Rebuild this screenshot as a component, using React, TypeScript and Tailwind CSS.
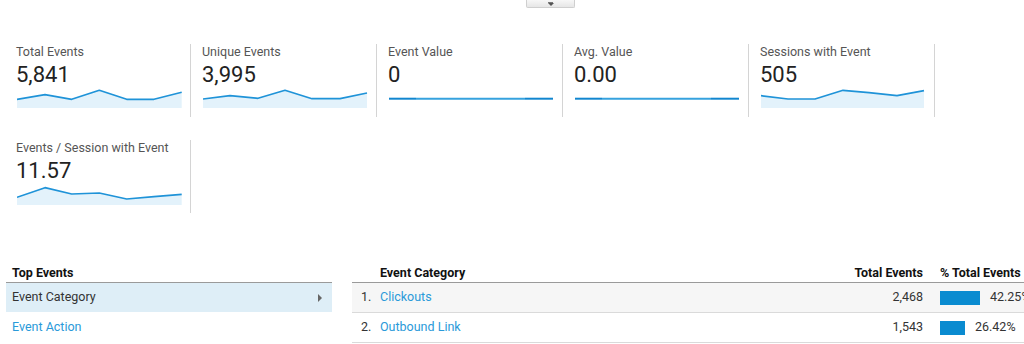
import React from "react";

type P = [number, number];

const Spark = ({ pts, bottom = 20 }: { pts: P[]; bottom?: number }) => {
  const line = pts.map((p) => p.join(",")).join(" ");
  const area = `${pts[0][0]},${bottom} ${line} ${pts[pts.length - 1][0]},${bottom}`;
  return (
    <svg width="166" height="22" className="block ml-[1px]">
      <polygon points={area} fill="#e3f2fb" />
      <polyline points={line} fill="none" stroke="#1f93d8" strokeWidth="1.7" strokeLinejoin="round" />
    </svg>
  );
};

const Flat = () => (
  <svg width="166" height="22" className="block ml-[1px]">
    <line x1="0" y1="10.7" x2="27" y2="10.7" stroke="#1186cf" strokeWidth="2" />
    <line x1="27" y1="10.7" x2="136" y2="10.7" stroke="#36a2de" strokeWidth="2" />
    <line x1="136" y1="10.7" x2="164" y2="10.7" stroke="#1186cf" strokeWidth="2" />
  </svg>
);

const Card = ({ label, value, children }: { label: string; value: string; children: React.ReactNode }) => (
  <div className="h-[73px] border-r border-[#d4d4d4] pl-[11px]">
    <div className="text-[12.5px] leading-[15px] text-[#555]">{label}</div>
    <div className="mt-[3px] text-[22px] leading-[26px] text-[#222]">{value}</div>
    {children}
  </div>
);

export default function App() {
  return (
    <div className="w-[1024px] h-[344px] overflow-hidden bg-white" style={{ fontFamily: "Roboto, 'Liberation Sans', sans-serif" }}>
      <div className="h-[44px]">
        <div className="ml-[526px] w-[49px] h-[8px] rounded-b-[2px] border border-t-0 border-[#cfcfcf] bg-gradient-to-b from-[#f7f7f7] to-[#e6e6e6] flex flex-col items-center pt-[2px]">
          <div className="w-[5px] h-[1px] bg-[#777]" />
          <div className="w-0 h-0 border-l-[3px] border-r-[3px] border-t-[3px] border-l-transparent border-r-transparent border-t-[#555]" />
        </div>
      </div>
      <div className="grid grid-cols-[repeat(5,186px)] gap-y-[23px] pl-[5px]">
        <Card label="Total Events" value="5,841">
          <Spark pts={[[0, 11.3], [28, 6.7], [54.7, 11.3], [82.3, 2.3], [109.7, 11.3], [137, 11.3], [164.7, 4.3]]} />
        </Card>
        <Card label="Unique Events" value="3,995">
          <Spark pts={[[0, 11], [27, 7.7], [55, 10.3], [82, 2.3], [109, 10.7], [137, 10.7], [164, 5]]} />
        </Card>
        <Card label="Event Value" value="0">
          <Flat />
        </Card>
        <Card label="Avg. Value" value="0.00">
          <Flat />
        </Card>
        <Card label="Sessions with Event" value="505">
          <Spark pts={[[0, 7.7], [27, 11], [54, 11], [82, 2.3], [108, 4.7], [136, 7.7], [163, 2.7]]} />
        </Card>
        <Card label="Events / Session with Event" value="11.57">
          <Spark bottom={21} pts={[[0, 13.3], [28, 3.7], [54.7, 10], [82.3, 9], [109.7, 15], [137, 12.7], [164.7, 10.3]]} />
        </Card>
      </div>

      <div className="mt-[48px] flex text-[12.5px] text-[#333]">
        <div className="ml-[6px] w-[326px] shrink-0">
          <div className="pt-[4px] pb-[2px] leading-[15px] border-b border-[#9a9a9a] pl-[6px] font-bold text-[#111]">Top Events</div>
          <div className="h-[29px] bg-[#deeef7] flex items-center justify-between pl-[6px] pr-[10px] text-[#333]">
            <span>Event Category</span>
            <span className="w-0 h-0 border-t-[4px] border-b-[4px] border-l-[4px] border-t-transparent border-b-transparent border-l-[#666]" />
          </div>
          <div className="h-[30px] pt-px flex items-center pl-[6px] text-[#2a9ad9]">Event Action</div>
        </div>

        <div className="ml-[20px] w-[716px] shrink-0">
          <div className="flex pt-[4px] pb-[2px] leading-[15px] border-b border-[#9a9a9a] font-bold text-[#111]">
            <div className="w-[28px]" />
            <div className="flex-1">Event Category</div>
            <div className="w-[100px] text-right">Total Events</div>
            <div className="w-[145px] pl-[17px]">% Total Events</div>
          </div>
          <div className="flex h-[30px] items-center bg-[#f6f6f6] border-b border-[#dadada]">
            <div className="w-[28px] pl-[9px]">1.</div>
            <div className="flex-1 text-[#2a9ad9]">Clickouts</div>
            <div className="w-[100px] text-right">2,468</div>
            <div className="w-[145px] pl-[17px] flex items-center">
              <div className="w-[40px] h-[14px] bg-[#0a8bd0]" />
              <span className="ml-[10px]">42.25%</span>
            </div>
          </div>
          <div className="flex h-[30px] items-center border-b border-[#dadada]">
            <div className="w-[28px] pl-[9px]">2.</div>
            <div className="flex-1 text-[#2a9ad9]">Outbound Link</div>
            <div className="w-[100px] text-right">1,543</div>
            <div className="w-[145px] pl-[17px] flex items-center">
              <div className="w-[25px] h-[14px] bg-[#0a8bd0]" />
              <span className="ml-[10px]">26.42%</span>
            </div>
          </div>
        </div>
      </div>
    </div>
  );
}
